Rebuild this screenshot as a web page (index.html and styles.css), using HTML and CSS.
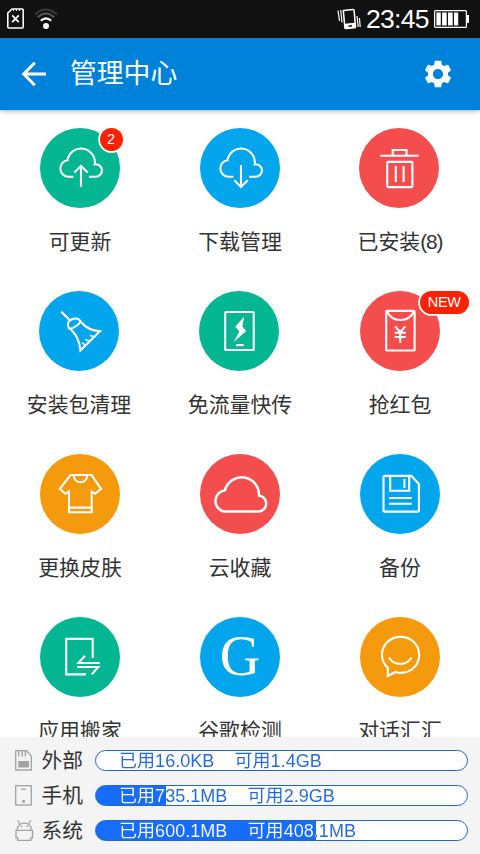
FILE: index.html
```html
<!DOCTYPE html>
<html lang="zh-CN">
<head>
<meta charset="utf-8">
<title>管理中心</title>
<link rel="stylesheet" href="styles.css">
</head>
<body>
<div class="screen">
  <div class="status">
    <svg class="status-sim" width="18" height="22" viewBox="0 0 18 22" fill="none" stroke="#fff" stroke-width="1.6"><path d="M5 1H15.2Q16.2 1 16.2 2V19Q16.2 20 15.2 20H1.8Q.8 20 .8 19V5Z"/><path d="M5.2 7.4l6.6 6.8M11.8 7.4l-6.6 6.8" stroke-width="1.8"/><path d="M6.5 1v2M9.5 1v2M12.5 1v2" stroke-width="1"/></svg>
    <svg class="status-wifi" width="24" height="22" viewBox="0 0 24 22" fill="none" stroke-width="2"><path d="M1 6.5Q12 -3.5 23 6.5" stroke="#3a3a3a"/><path d="M3.8 9.3Q12 1.8 20.2 9.3" stroke="#555"/><path d="M6.8 12.8Q12 7.8 17.2 12.8" stroke="#fff" stroke-width="2.2"/><circle cx="12" cy="18" r="3" fill="#fff"/></svg>
    <div class="status-right">
      <svg width="24" height="22" viewBox="0 0 24 22" fill="none" stroke="#fff"><path d="M6.3 2.6L16 1.5Q17 1.4 17.1 2.4L18.5 18.6Q18.6 19.7 17.5 19.8L9 20.6Q8 20.7 7.9 19.7Z" stroke-width="1.5"/><path d="M7.4 15.8L18.2 14.8L18.7 19.4L8 20.4Z" fill="#fff" stroke="none"/><path d="M11.5 18.2l3.5-.4" stroke="#111" stroke-width="1.4"/><path d="M1 2.5L2.5 13M3.7 2L5 14.5M20 8l1.2 11M22.4 10l.8 9" stroke-width="1.2"/></svg>
      <span class="clock">23:45</span>
      <svg class="battery" width="36" height="20" viewBox="0 0 36 20"><rect x=".6" y="1.6" width="31.8" height="16.8" rx="1" fill="none" stroke="#fff" stroke-width="1.2"/><path d="M33 6h2v8h-2zM2.4 3.5H6.8v13H2.4zM8.1 3.5h4.6v13H8.1zM14 3.5h4.7v13H14zM20 3.5h4.2v13H20z" fill="#fff"/></svg>
    </div>
  </div>
  <header class="header">
    <svg width="26" height="26" viewBox="0 0 26 26" fill="none" stroke="#fff" stroke-width="3"><path d="M13.8 1.7L2.7 13L13.8 24.3M2.7 13H25"/></svg>
    <h1>管理中心</h1>
    <svg class="gear" width="32" height="32" viewBox="0 0 24 24" fill="#fff"><path d="M19.43 12.98c.04-.32.07-.64.07-.98s-.03-.66-.07-.98l2.11-1.65c.19-.15.24-.42.12-.64l-2-3.46c-.12-.22-.39-.3-.61-.22l-2.49 1c-.52-.4-1.08-.73-1.69-.98l-.38-2.65C14.46 2.18 14.25 2 14 2h-4c-.25 0-.46.18-.49.42l-.38 2.65c-.61.25-1.17.59-1.69.98l-2.49-1c-.23-.09-.49 0-.61.22l-2 3.46c-.13.22-.07.49.12.64l2.11 1.65c-.04.32-.07.65-.07.98s.03.66.07.98l-2.11 1.65c-.19.15-.24.42-.12.64l2 3.46c.12.22.39.3.61.22l2.49-1c.52.4 1.08.73 1.69.98l.38 2.65c.03.24.24.42.49.42h4c.25 0 .46-.18.49-.42l.38-2.65c.61-.25 1.17-.59 1.69-.98l2.49 1c.23.09.49 0 .61-.22l2-3.46c.12-.22.07-.49-.12-.64l-2.11-1.65zM12 15.8c-2.1 0-3.8-1.7-3.8-3.8s1.7-3.8 3.8-3.8 3.8 1.7 3.8 3.8-1.7 3.8-3.8 3.8z"/></svg>
  </header>
  <main class="grid">
    <div class="tile"><div class="disc green"><svg viewBox="0 0 80 80"><path d="M33.5 48.7H28A8.3 8.3 0 0 1 27.5 32.2A13.6 13.6 0 1 1 54.7 36.4A6.2 6.2 0 1 1 55.5 48.7H49"/><path d="M41 58.8V38M34.3 44.6L41 38L47.7 44.6"/></svg><span class="badge count">2</span></div><span class="label">可更新</span></div>
    <div class="tile"><div class="disc blue"><svg viewBox="0 0 80 80"><path d="M33.5 48.7H28A8.3 8.3 0 0 1 27.5 32.2A13.6 13.6 0 1 1 54.7 36.4A6.2 6.2 0 1 1 55.5 48.7H49"/><path d="M41 37V59M34.3 52.2L41 59L47.7 52.2"/></svg></div><span class="label">下载管理</span></div>
    <div class="tile"><div class="disc red nudge"><svg viewBox="0 0 80 80"><path d="M21.3 27.7H59.7M33.7 27.7V22H47.5V27.7M36.8 38V54M44.6 38V54"/><rect x="28.2" y="33.9" width="25.2" height="25.2" rx="1"/></svg></div><span class="label">已安装<span class="tight">(8)</span></span></div>

    <div class="tile"><div class="disc blue nudge"><svg viewBox="0 0 80 80"><path d="M22.3 20.7L30.3 28.7" stroke-width="2.3"/><path d="M30.4 38C27.5 34 29 30 32.5 28.5C36 26.5 40 27.5 41.8 30.5Q38 36 30.4 38ZM32.2 38.7Q40.5 47 41.4 59.3L61 40.2Q49 39.5 42.6 31.5"/><path d="M43 51.5L46.2 54.5M46.2 48.5L51 50.2M50.8 44.5L55.5 45.7" stroke-width="1.4"/></svg></div><span class="label shift">安装包清理</span></div>
    <div class="tile"><div class="disc green nudge"><svg viewBox="0 0 80 80"><rect x="26.2" y="21" width="28.5" height="38" rx=".8"/><path d="M45 25.7L36.2 35.7L40.3 40.2L34.8 51L47.2 40L43.4 35.5Z" fill="#fff" stroke="none"/><path d="M37 54.1H44.7"/></svg></div><span class="label">免流量快传</span></div>
    <div class="tile"><div class="disc red"><svg viewBox="0 0 80 80"><rect x="26.2" y="19.9" width="28.4" height="39.6" rx=".8"/><path d="M27 20.5Q31 29 40.4 29Q50 29 54 20.5M35.2 35.4L40.2 41.2L45.3 35.4M40.2 41V51.8M34.7 41.7H45.8M34.7 46H45.8"/></svg><span class="badge new">NEW</span></div><span class="label">抢红包</span></div>

    <div class="tile"><div class="disc orange"><svg viewBox="0 0 80 80"><path d="M30.5 21H51.5L61 34.8L55.3 39.7L51.7 37.5V58.2H29V37.5L25.4 39.7L19.8 34.8ZM29 53.6H51.7M33.7 21.5C34.5 30.5 46.5 30.5 47.3 21.5"/></svg></div><span class="label">更换皮肤</span></div>
    <div class="tile"><div class="disc red"><svg viewBox="0 0 80 80"><path d="M24.5 57.6A10.8 10.8 0 0 1 25 36.2A17.3 17.3 0 0 1 59 41.5A8.1 8.1 0 0 1 59 57.6Z" stroke-width="2.5"/></svg></div><span class="label">云收藏</span></div>
    <div class="tile"><div class="disc blue"><svg viewBox="0 0 80 80"><path d="M24.5 21.9H51.3L58.9 30V56.6Q58.9 57.6 57.9 57.6H24.5Q23.5 57.6 23.5 56.6V22.9Q23.5 21.9 24.5 21.9ZM30.2 22V36.7H49.2V22M44.4 25V34M29 44H51.8M29 49.7H51.8"/></svg></div><span class="label">备份</span></div>

    <div class="tile"><div class="disc green"><svg viewBox="0 0 80 80"><path d="M52.7 41V21.9H26.2V57.4H46M45 38.7L38.5 46H59.8M37 50H58.3L51.7 57.4"/></svg></div><span class="label">应用搬家</span></div>
    <div class="tile"><div class="disc blue"><span class="letter">G</span></div><span class="label">谷歌检测</span></div>
    <div class="tile"><div class="disc orange"><svg viewBox="0 0 80 80"><path d="M27.8 50.5V59L35.5 55C47 58.5 59.2 50.5 59.2 38C59.2 27.5 51 19.9 40.5 19.9C30 19.9 22 27.5 22 37.8C22 43 24 47.5 27.8 50.5ZM29 40.5C34 49 46.5 49 51.5 40.5"/></svg></div><span class="label">对话汇汇</span></div>
  </main>
  <footer class="storage">
    <div class="row">
      <svg width="17" height="21" viewBox="0 0 17 21" fill="none" stroke="#a2a2a2" stroke-width="1.3"><path d="M.7.7H11.5L16.3 6V20H.7Z"/><path d="M3.7 1v5.5M7.2 1v5.5M10.4 1v5.5" stroke-width="1.4"/><path d="M3.2 11H14v6.5H3.2z" fill="#a2a2a2" stroke="none"/></svg>
      <span class="name">外部</span>
      <div class="bar" style="--used:0px"><span>已用16.0KB    可用1.4GB</span></div>
    </div>
    <div class="row">
      <svg width="17" height="21" viewBox="0 0 17 21" fill="none" stroke="#a2a2a2" stroke-width="1.3"><rect x=".7" y=".7" width="15.6" height="19.3"/><path d="M6 4.2h5"/><circle cx="8.6" cy="16.2" r="1.5" fill="#a2a2a2" stroke="none"/></svg>
      <span class="name">手机</span>
      <div class="bar" style="--used:71px"><span>已用735.1MB    可用2.9GB</span></div>
    </div>
    <div class="row">
      <svg width="19" height="21" viewBox="0 0 19 21" fill="none" stroke="#a2a2a2" stroke-width="1.3"><path d="M2.3 9.5C2.3 1 16.2 1 16.2 9.5M4.8 3.8L2.8 .3M13.7 3.8L15.7 .3M1 10.3H17.5V18H15.8V20.3H2.7V18H1Z"/><path d="M5.6 6.3h1.8M11.2 6.3H13"/></svg>
      <span class="name">系统</span>
      <div class="bar" style="--used:221px"><span>已用600.1MB    可用408.1MB</span></div>
    </div>
  </footer>
</div>
</body>
</html>
```
FILE: styles.css
```css
* { box-sizing: border-box; }
body {
  margin: 0;
  background: #fff;
  color: #333;
  font-family: "Liberation Sans", "Noto Sans CJK SC", sans-serif;
}
svg { display: block; flex: none; }
.screen {
  width: 480px;
  height: 854px;
  display: flex;
  flex-direction: column;
  overflow: hidden;
}
.status {
  height: 38px;
  flex: none;
  display: flex;
  align-items: center;
  padding: 0 11px 0 7px;
  background: #111;
  color: #fff;
}
.status-wifi { margin-left: 9px; }
.status-right { margin-left: auto; display: flex; align-items: center; }
.clock { margin-left: 5px; width: 68px; font-size: 26.5px; line-height: 38px; letter-spacing: -0.7px; }
.battery { margin-right: -1px; }
.header {
  height: 72px;
  flex: none;
  display: flex;
  align-items: center;
  padding: 0 26.5px 0 21px;
  background: #0182da;
  color: #fff;
  box-shadow: 0 1px 5px rgba(0, 0, 0, .35);
  z-index: 1;
}
.header h1 {
  margin: 0 0 0 23px;
  font-size: 26.8px;
  font-weight: 400;
  line-height: 72px;
}
.gear { margin-left: auto; }
.grid {
  height: 627px;
  flex: none;
  display: grid;
  grid-template-columns: repeat(3, 160px);
  grid-auto-rows: 163px;
  overflow: hidden;
}
.tile {
  display: flex;
  flex-direction: column;
  align-items: center;
  padding-top: 18px;
}
.disc {
  position: relative;
  width: 80px;
  height: 80px;
  flex: none;
  border-radius: 50%;
}
.disc svg { width: 80px; height: 80px; fill: none; stroke: #fff; stroke-width: 2.1; }
.nudge { left: -1px; }
.green { background: #04b692; }
.blue { background: #03a5ec; }
.red { background: #f44d4d; }
.orange { background: #f49a0c; }
.label { margin-top: 18px; font-size: 20.9px; line-height: 32px; white-space: nowrap; }
.tight { letter-spacing: -1.1px; }
.shift { transform: translateX(-1px); }
.letter {
  display: block;
  text-align: center;
  font: 56px/78px "Liberation Serif", serif;
  color: #fff;
}
.badge {
  position: absolute;
  background: #fb2103;
  color: #fff;
  font-size: 14.5px;
  text-align: center;
  box-shadow: 0 0 0 1.8px #fff;
}
.count { left: 59.5px; top: 0; width: 23px; height: 23px; line-height: 23px; border-radius: 50%; }
.new { left: 60px; top: 0; width: 48.5px; height: 23px; line-height: 23px; border-radius: 12px; letter-spacing: -0.2px; }
.storage {
  flex: 1;
  display: flex;
  flex-direction: column;
  gap: 14px;
  padding: 13px 12px 0 15px;
  background: #f4f4f4;
}
.row {
  height: 21px;
  display: grid;
  grid-template-columns: 26.5px 53.5px 1fr;
  grid-template-rows: 21px;
  align-items: center;
}
.name { font-size: 20.7px; line-height: 22px; }
.bar {
  height: 21px;
  border: 1px solid #2268c8;
  border-radius: 11px;
  background: linear-gradient(90deg, #176dfb var(--used), #fff var(--used)) border-box;
}
.bar span {
  display: block;
  padding-left: 23px;
  font-size: 18px;
  line-height: 21px;
  letter-spacing: 0.04px;
  white-space: pre;
  color: transparent;
  background: linear-gradient(90deg, #fff calc(var(--used) - 1px), #2269df calc(var(--used) - 1px));
  -webkit-background-clip: text;
  background-clip: text;
}
```
